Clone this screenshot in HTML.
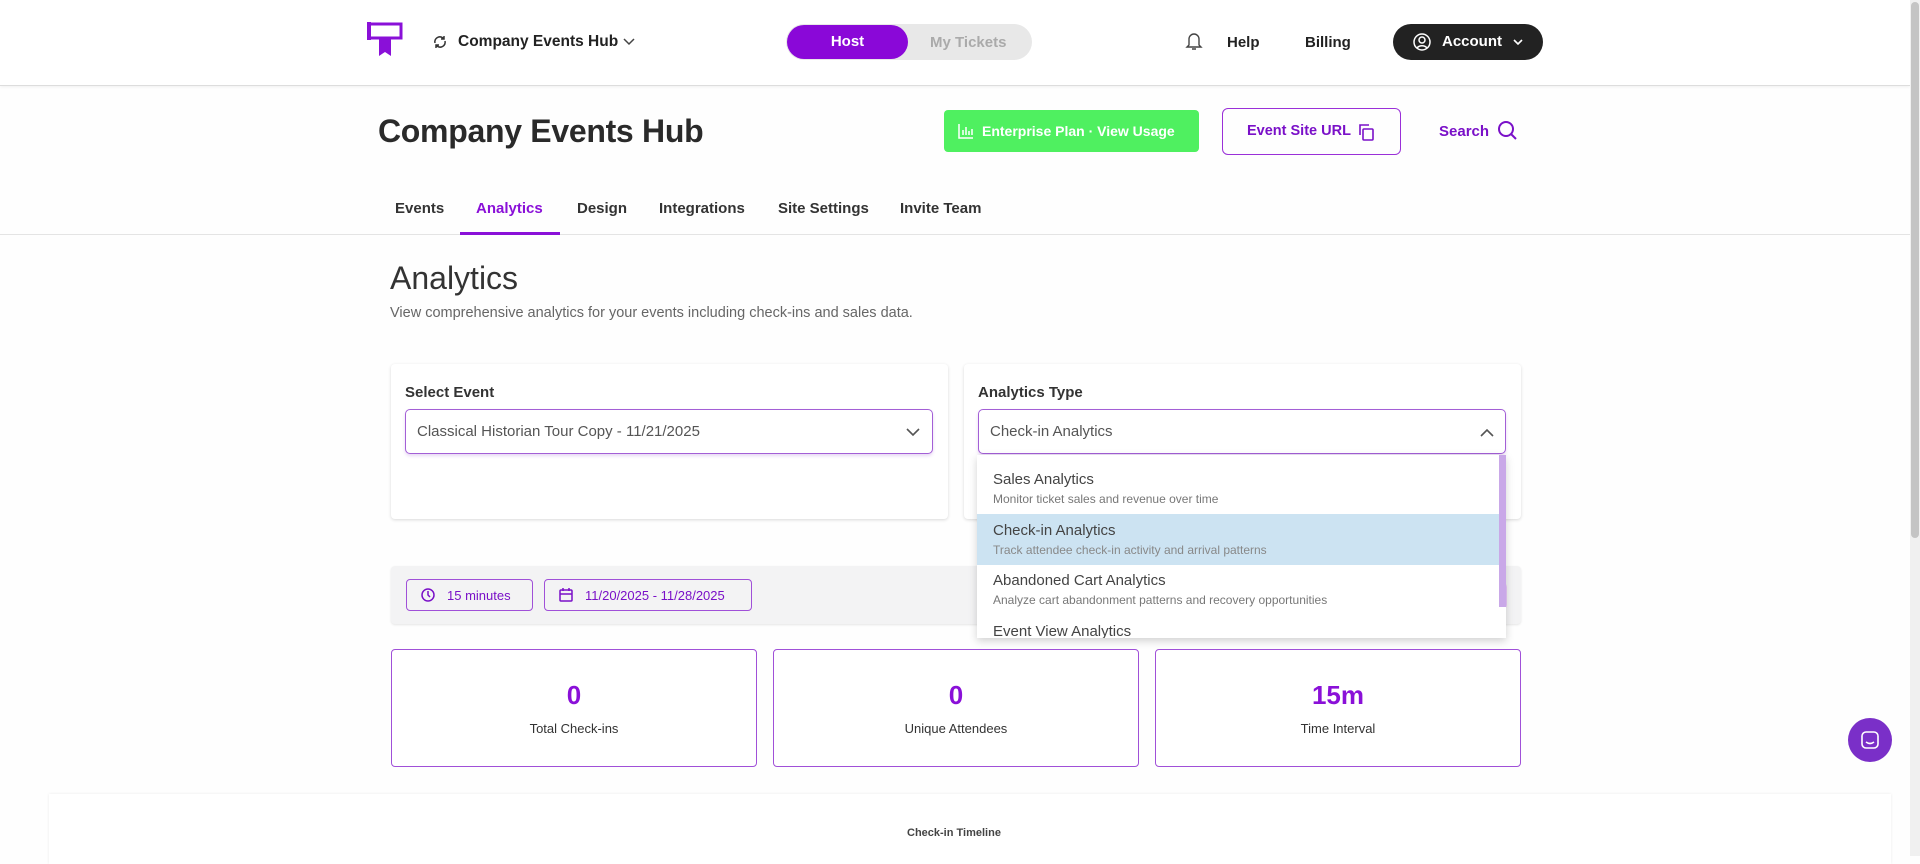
<!DOCTYPE html>
<html><head><meta charset="utf-8"><style>
*{box-sizing:border-box;margin:0;padding:0}
body{width:1920px;height:856px;overflow:hidden;background:#fefefe;font-family:"Liberation Sans",sans-serif;color:#222;position:relative}
.a{position:absolute}
.hdr{left:0;top:0;width:1910px;height:86px;background:#fff;border-bottom:1px solid #ddd;box-shadow:0 1px 3px rgba(0,0,0,.06)}
.t{white-space:nowrap}
.card{background:#fff;border-radius:4px;box-shadow:0 1px 3px rgba(0,0,0,.15)}
.sel{border:1.5px solid #a35fd6;border-radius:5px;background:#fff;box-shadow:0 2px 3px rgba(140,60,200,.2)}
.stat{border:1.5px solid #a050d8;border-radius:4px;background:#fff;text-align:center}
.stat b{display:block;color:#8a10d8;font-size:26px;margin-top:30px}
.stat span{display:block;font-size:13px;color:#333;margin-top:10px}
.pb{border:1.5px solid #a050d8;border-radius:4px;color:#7a10c8;font-size:13px;display:flex;align-items:center;gap:12px;padding-left:14px}
</style></head><body>
<div class="a hdr"></div>
<svg class="a" style="left:367px;top:22px" width="36" height="36" viewBox="0 0 36 36"><rect x="2" y="2" width="32" height="14" fill="#fff" stroke="#8a10d8" stroke-width="3"/><rect x="0" y="0" width="4" height="18" fill="#8a10d8"/><path d="M12 16h12v18l-6-4-6 4z" fill="#8a10d8"/></svg>
<svg class="a" style="left:432px;top:34px" width="16" height="16" viewBox="0 0 16 16" fill="none" stroke="#333" stroke-width="1.5"><path d="M3 9a5 5 0 0 1 8-5l1 1M13 7a5 5 0 0 1-8 5l-1-1M12 2v3H9M4 14v-3h3"/></svg>
<div class="a t" style="left:458px;top:33px;font-size:15.5px;font-weight:bold;color:#222">Company Events Hub</div>
<svg class="a" style="left:623px;top:38px" width="12" height="8"><path d="M1 1l5 5 5-5" stroke="#444" fill="none" stroke-width="1.5"/></svg>
<div class="a" style="left:786px;top:24px;width:246px;height:36px;border-radius:18px;background:#e8e8e8"></div>
<div class="a" style="left:787px;top:25px;width:121px;height:34px;border-radius:17px;background:#8a08d8;color:#fff;font-weight:bold;font-size:15px;text-align:center;line-height:34px">Host</div>
<div class="a t" style="left:930px;top:34px;font-size:15px;color:#aaa;font-weight:bold">My Tickets</div>
<svg class="a" style="left:1185px;top:31px" width="18" height="20" viewBox="0 0 18 20" fill="none" stroke="#444" stroke-width="1.4"><path d="M4 14V8a5 5 0 0 1 10 0v6l2 2H2zM7 18h4"/></svg>
<div class="a t" style="left:1227px;top:34px;font-size:15px;font-weight:bold">Help</div>
<div class="a t" style="left:1305px;top:34px;font-size:15px;font-weight:bold">Billing</div>
<div class="a" style="left:1393px;top:24px;width:150px;height:36px;border-radius:18px;background:#222;color:#fff;font-size:15px;font-weight:bold;line-height:36px;padding-left:49px">Account</div>
<svg class="a" style="left:1413px;top:33px" width="18" height="18" viewBox="0 0 18 18" fill="none" stroke="#fff" stroke-width="1.5"><circle cx="9" cy="9" r="8"/><circle cx="9" cy="7" r="3"/><path d="M4 15a6 5 0 0 1 10 0"/></svg>
<svg class="a" style="left:1513px;top:39px" width="10" height="7"><path d="M1 1l4 4 4-4" stroke="#fff" fill="none" stroke-width="1.6"/></svg>
<div class="a" style="left:1910px;top:0;width:10px;height:856px;background:#f0f0f0"></div>
<div class="a" style="left:1911px;top:2px;width:8px;height:536px;background:#c4c4c4;border-radius:4px"></div>

<div class="a t" style="left:378px;top:113px;font-size:32px;font-weight:bold;color:#2a2a2a;letter-spacing:-0.3px">Company Events Hub</div>
<div class="a" style="left:944px;top:110px;width:255px;height:42px;background:#4ff060;border-radius:4px;color:#fff;font-size:14px;font-weight:bold;line-height:42px;padding-left:38px">Enterprise Plan · View Usage</div>
<svg class="a" style="left:958px;top:123px" width="16" height="16" fill="none" stroke="#fff" stroke-width="1.5"><path d="M1 1v14h14M5 12V7M8 12V4M11 12V8M14 12V6"/></svg>
<div class="a" style="left:1222px;top:108px;width:179px;height:47px;border:1.5px solid #9a30d8;border-radius:6px;color:#7a10c8;font-size:14.5px;font-weight:bold;line-height:44px;padding-left:24px">Event Site URL</div>
<svg class="a" style="left:1357px;top:123px" width="18" height="18" fill="none" stroke="#7a10c8" stroke-width="1.6"><rect x="6" y="6" width="10" height="11" rx="1"/><path d="M3 12V2h9"/></svg>
<div class="a t" style="left:1439px;top:123px;font-size:15px;font-weight:bold;color:#7a10c8">Search</div>
<svg class="a" style="left:1497px;top:120px" width="22" height="22" fill="none" stroke="#7a10c8" stroke-width="2"><circle cx="9" cy="9" r="7"/><path d="M14 14l5 5"/></svg>

<div class="a" style="left:0;top:234px;width:1910px;height:1px;background:#e4e4e4"></div>
<div class="a t" style="left:395px;top:200px;font-size:15px;font-weight:bold;color:#333">Events</div>
<div class="a t" style="left:476px;top:200px;font-size:15px;font-weight:bold;color:#8a10d8">Analytics</div>
<div class="a t" style="left:577px;top:200px;font-size:15px;font-weight:bold;color:#333">Design</div>
<div class="a t" style="left:659px;top:200px;font-size:15px;font-weight:bold;color:#333">Integrations</div>
<div class="a t" style="left:778px;top:200px;font-size:15px;font-weight:bold;color:#333">Site Settings</div>
<div class="a t" style="left:900px;top:200px;font-size:15px;font-weight:bold;color:#333">Invite Team</div>
<div class="a" style="left:460px;top:232px;width:100px;height:3px;background:#8a10d8"></div>

<div class="a t" style="left:390px;top:260px;font-size:32px;color:#333">Analytics</div>
<div class="a t" style="left:390px;top:305px;font-size:14.5px;color:#666">View comprehensive analytics for your events including check-ins and sales data.</div>

<div class="a card" style="left:391px;top:364px;width:557px;height:155px"></div>
<div class="a card" style="left:964px;top:364px;width:557px;height:155px"></div>
<div class="a t" style="left:405px;top:384px;font-size:15px;font-weight:bold;color:#333">Select Event</div>
<div class="a t" style="left:978px;top:384px;font-size:15px;font-weight:bold;color:#333">Analytics Type</div>
<div class="a sel" style="left:405px;top:409px;width:528px;height:45px"></div>
<div class="a t" style="left:417px;top:423px;font-size:15px;color:#555">Classical Historian Tour Copy - 11/21/2025</div>
<svg class="a" style="left:906px;top:428px" width="14" height="9"><path d="M1 1l6 6 6-6" stroke="#555" fill="none" stroke-width="1.6"/></svg>
<div class="a sel" style="left:978px;top:409px;width:528px;height:45px"></div>
<div class="a t" style="left:990px;top:423px;font-size:15px;color:#555">Check-in Analytics</div>
<svg class="a" style="left:1480px;top:428px" width="14" height="9"><path d="M1 8l6-6 6 6" stroke="#555" fill="none" stroke-width="1.6"/></svg>

<div class="a" style="left:391px;top:566px;width:1130px;height:58px;background:#f3f3f4;border-radius:4px;box-shadow:0 1px 2px rgba(0,0,0,.1)"></div>
<div class="a pb" style="left:406px;top:579px;width:127px;height:32px"><svg width="14" height="14" fill="none" stroke="#7a10c8" stroke-width="1.5"><circle cx="7" cy="7" r="6"/><path d="M7 3v4l2 2"/></svg>15 minutes</div>
<div class="a pb" style="left:544px;top:579px;width:208px;height:32px"><svg width="14" height="14" fill="none" stroke="#7a10c8" stroke-width="1.5"><rect x="1" y="2" width="12" height="11" rx="1"/><path d="M1 6h12M4 0v3M10 0v3"/></svg>11/20/2025 - 11/28/2025</div>
<div class="a" style="left:1432px;top:580px;width:75px;height:32px;background:#e8c8f8;border-radius:8px"></div>

<div class="a" style="left:977px;top:455px;width:529px;height:183px;background:#fff;box-shadow:0 3px 8px rgba(0,0,0,.18);overflow:hidden">
<div style="position:absolute;left:0;top:59px;width:522px;height:51px;background:#cce3f2"></div>
<div style="position:absolute;right:0;top:0;width:7px;height:152px;background:#c9a8e8"></div>
<div class="a t" style="left:16px;top:16px;font-size:15px;color:#444">Sales Analytics</div>
<div class="a t" style="left:16px;top:37px;font-size:12px;color:#777">Monitor ticket sales and revenue over time</div>
<div class="a t" style="left:16px;top:67px;font-size:15px;color:#444">Check-in Analytics</div>
<div class="a t" style="left:16px;top:88px;font-size:12px;color:#888">Track attendee check-in activity and arrival patterns</div>
<div class="a t" style="left:16px;top:117px;font-size:15px;color:#444">Abandoned Cart Analytics</div>
<div class="a t" style="left:16px;top:138px;font-size:12px;color:#777">Analyze cart abandonment patterns and recovery opportunities</div>
<div class="a t" style="left:16px;top:168px;font-size:15px;color:#444">Event View Analytics</div>
</div>

<div class="a stat" style="left:391px;top:649px;width:366px;height:118px"><b>0</b><span>Total Check-ins</span></div>
<div class="a stat" style="left:773px;top:649px;width:366px;height:118px"><b>0</b><span>Unique Attendees</span></div>
<div class="a stat" style="left:1155px;top:649px;width:366px;height:118px"><b>15m</b><span>Time Interval</span></div>

<div class="a" style="left:49px;top:794px;width:1842px;height:70px;background:#fff;box-shadow:0 0 3px rgba(0,0,0,.08)"></div>
<div class="a t" style="left:907px;top:827px;font-size:11px;font-weight:bold;color:#444">Check-in Timeline</div>
<div class="a" style="left:1848px;top:718px;width:44px;height:44px;border-radius:50%;background:#7a2fc8"></div>
<svg class="a" style="left:1861px;top:731px" width="18" height="18" fill="none" stroke="#fff" stroke-width="1.6"><rect x="1" y="1" width="16" height="16" rx="4"/><path d="M5 11q4 3 8 0"/></svg>
</body></html>
